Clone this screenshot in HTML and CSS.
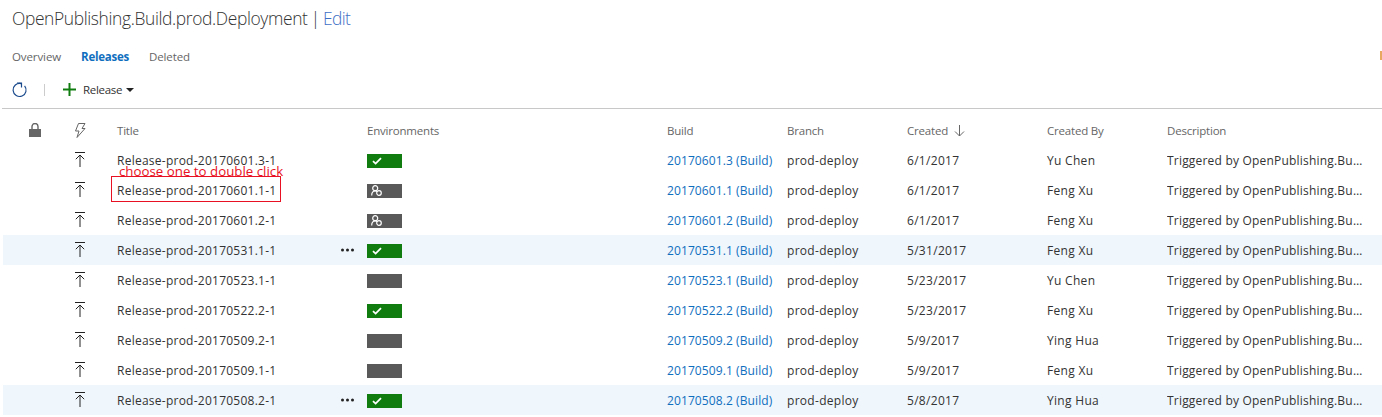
FILE: index.html
```html
<!DOCTYPE html>
<html lang="en">
<head>
<meta charset="utf-8">
<title>OpenPublishing.Build.prod.Deployment</title>
<link rel="stylesheet" href="styles.css">
</head>
<body>
<svg class="defs" width="0" height="0">
  <symbol id="up" viewBox="0 0 10 15"><path d="M0 .5h10M5 15V3M.8 7.200 5 3l4.200 4.200" fill="none" stroke="#222" stroke-width="1"/></symbol>
  <symbol id="check" viewBox="0 0 10 8"><path d="M1 4.200 3.600 6.600 9 1.200" fill="none" stroke="#fff" stroke-width="1.800"/></symbol>
  <symbol id="approver" viewBox="0 0 11 11"><circle cx="4.200" cy="3.200" r="2.500" fill="none" stroke="#fff" stroke-width="1.200"/><path d="M.7 10.500c0-2.800 1.300-4.500 3.500-4.500 .8 0 1.400.2 1.900.5" fill="none" stroke="#fff" stroke-width="1.200"/><circle cx="8" cy="8" r="2.300" fill="none" stroke="#fff" stroke-width="1.200"/></symbol>
  <symbol id="dots" viewBox="0 0 13 4"><circle cx="1.500" cy="2" r="1.500" fill="#222"/><circle cx="6.500" cy="2" r="1.500" fill="#222"/><circle cx="11.500" cy="2" r="1.500" fill="#222"/></symbol>
</svg>
<header class="title"><span>OpenPublishing.Build.prod.Deployment</span> <span class="sep">|</span> <a class="edit">Edit</a></header>
<nav class="tabs">
  <a class="tab">Overview</a>
  <a class="tab active">Releases</a>
  <a class="tab">Deleted</a>
  <i class="edge"></i>
</nav>
<div class="toolbar">
  <svg class="refresh" width="16" height="16" viewBox="0 0 16 16"><path d="M12.600 3.800A6.500 6.500 0 1 1 9 1.600" fill="none" stroke="#1a4a8c" stroke-width="1.200"/><path d="M5 1H9.500V5.500" fill="none" stroke="#1a4a8c" stroke-width="1.200"/></svg>
  <span class="divider"></span>
  <svg class="plus" width="13" height="13" viewBox="0 0 13 13"><path d="M6.500 0v13M0 6.500h13" stroke="#107c10" stroke-width="2"/></svg>
  <span class="new">Release</span>
  <span class="caret"></span>
</div>
<section class="table">
  <div class="row head">
    <span class="c-lock"><svg width="12" height="14" viewBox="0 0 12 14"><path d="M3 6V3.500a3 3 0 0 1 6 0V6" fill="none" stroke="#666" stroke-width="1.400"/><rect x="0" y="6" width="12" height="8" fill="#666"/></svg></span>
    <span class="c-icon"><svg class="bolt" width="12" height="15" viewBox="0 0 12 15"><path d="M4.500.5H11L8 5.500h3L3 14.500 5 8H1.500Z" fill="none" stroke="#666" stroke-width="1"/></svg></span>
    <span>Title</span><span>Environments</span><span>Build</span><span>Branch</span>
    <span class="sorted">Created <svg width="11" height="12" viewBox="0 0 11 12"><path d="M5.500 0v11M1 6.500 5.500 11 10 6.500" fill="none" stroke="#666" stroke-width="1"/></svg></span>
    <span>Created By</span><span>Description</span>
  </div>

  <div class="row"><span class="c-lock"></span><span class="c-icon"><svg class="up"><use href="#up"/></svg></span><span class="name">Release-prod-20170601.3-1</span><span><span class="env ok"><svg class="chk"><use href="#check"/></svg></span></span><a class="link">20170601.3 (Build)</a><span>prod-deploy</span><span>6/1/2017</span><span>Yu Chen</span><span class="desc">Triggered by OpenPublishing.Build.prod.Deployment</span></div>
  <div class="row"><span class="c-lock"></span><span class="c-icon"><svg class="up"><use href="#up"/></svg></span><span class="name">Release-prod-20170601.1-1</span><span><span class="env idle"><svg class="appr"><use href="#approver"/></svg></span></span><a class="link">20170601.1 (Build)</a><span>prod-deploy</span><span>6/1/2017</span><span>Feng Xu</span><span class="desc">Triggered by OpenPublishing.Build.prod.Deployment</span></div>
  <div class="row"><span class="c-lock"></span><span class="c-icon"><svg class="up"><use href="#up"/></svg></span><span class="name">Release-prod-20170601.2-1</span><span><span class="env idle"><svg class="appr"><use href="#approver"/></svg></span></span><a class="link">20170601.2 (Build)</a><span>prod-deploy</span><span>6/1/2017</span><span>Feng Xu</span><span class="desc">Triggered by OpenPublishing.Build.prod.Deployment</span></div>
  <div class="row hot"><span class="c-lock"></span><span class="c-icon"><svg class="up"><use href="#up"/></svg></span><span class="name">Release-prod-20170531.1-1<svg class="more"><use href="#dots"/></svg></span><span><span class="env ok"><svg class="chk"><use href="#check"/></svg></span></span><a class="link">20170531.1 (Build)</a><span>prod-deploy</span><span>5/31/2017</span><span>Feng Xu</span><span class="desc">Triggered by OpenPublishing.Build.prod.Deployment</span></div>
  <div class="row"><span class="c-lock"></span><span class="c-icon"><svg class="up"><use href="#up"/></svg></span><span class="name">Release-prod-20170523.1-1</span><span><span class="env idle"></span></span><a class="link">20170523.1 (Build)</a><span>prod-deploy</span><span>5/23/2017</span><span>Yu Chen</span><span class="desc">Triggered by OpenPublishing.Build.prod.Deployment</span></div>
  <div class="row"><span class="c-lock"></span><span class="c-icon"><svg class="up"><use href="#up"/></svg></span><span class="name">Release-prod-20170522.2-1</span><span><span class="env ok"><svg class="chk"><use href="#check"/></svg></span></span><a class="link">20170522.2 (Build)</a><span>prod-deploy</span><span>5/23/2017</span><span>Feng Xu</span><span class="desc">Triggered by OpenPublishing.Build.prod.Deployment</span></div>
  <div class="row"><span class="c-lock"></span><span class="c-icon"><svg class="up"><use href="#up"/></svg></span><span class="name">Release-prod-20170509.2-1</span><span><span class="env idle"></span></span><a class="link">20170509.2 (Build)</a><span>prod-deploy</span><span>5/9/2017</span><span>Ying Hua</span><span class="desc">Triggered by OpenPublishing.Build.prod.Deployment</span></div>
  <div class="row"><span class="c-lock"></span><span class="c-icon"><svg class="up"><use href="#up"/></svg></span><span class="name">Release-prod-20170509.1-1</span><span><span class="env idle"></span></span><a class="link">20170509.1 (Build)</a><span>prod-deploy</span><span>5/9/2017</span><span>Feng Xu</span><span class="desc">Triggered by OpenPublishing.Build.prod.Deployment</span></div>
  <div class="row hot"><span class="c-lock"></span><span class="c-icon"><svg class="up"><use href="#up"/></svg></span><span class="name">Release-prod-20170508.2-1<svg class="more"><use href="#dots"/></svg></span><span><span class="env ok"><svg class="chk"><use href="#check"/></svg></span></span><a class="link">20170508.2 (Build)</a><span>prod-deploy</span><span>5/8/2017</span><span>Ying Hua</span><span class="desc">Triggered by OpenPublishing.Build.prod.Deployment</span></div>
</section>
<div class="note">choose one to double click</div>
<div class="markup"></div>
</body>
</html>
```
FILE: styles.css
```css
* { box-sizing: border-box; }
html, body { margin: 0; height: 417px; overflow: hidden; background: #fff; }
body { position: relative; font-family: "Open Sans", "Noto Sans", sans-serif; font-size: 12px; color: #333; }
.defs { position: absolute; }
.title { height: 38px; padding-left: 12px; padding-bottom: 2px; line-height: 36px; font-size: 17.400px; font-weight: 300; letter-spacing: -.36px; color: #333; white-space: pre; }
.sep { margin-left: -1px; }
.edit { margin-left: -1px; letter-spacing: -.6px; color: #3f6fc5; }
.tabs { height: 38px; display: flex; align-items: center; gap: 20px; padding-left: 12px; position: relative; font-size: 11.500px; letter-spacing: -.1px; color: #666; margin-top: -1px; margin-bottom: 1px; }
.tab.active { color: #106ebe; font-weight: 700; letter-spacing: -.25px; }
.edge { position: absolute; right: 0; top: 14px; width: 2px; height: 9px; background: #e8a860; }
.toolbar { height: 33px; padding: 0 0 5px 10px; display: flex; align-items: center; border-bottom: 1px solid #c8c8c8; margin-left: 2px; }
.refresh { margin-right: 16px; }
.divider { width: 1px; height: 12px; background: #ccc; margin-right: 18px; }
.plus { margin-right: 7px; }
.new { font-size: 11.500px; letter-spacing: -.3px; color: #333; }
.caret { width: 0; height: 0; margin-left: 4px; border: 4px solid transparent; border-top-color: #222; border-bottom: 0; }
.table { margin-left: 3px; }
.row { height: 30px; display: grid; grid-template-columns: 60px 54px 250px 300px 120px 120px 140px 120px 198px; align-items: center; white-space: nowrap; letter-spacing: .3px; }
.row.head { height: 36px; padding-top: 7px; padding-bottom: 1px; color: #666; }
.hot { background: #eff6fc; }
.row > span, .row > a { display: block; min-width: 0; font-size: 12px; }
.row.head > span { font-size: 11.500px; letter-spacing: -.2px; }
.c-lock { padding-left: 26px; line-height: 0; }
.c-icon { padding-left: 12px; line-height: 0; }
.head .c-icon { padding-left: 11px; }
.up { width: 10px; height: 15px; display: block; margin-top: -1px; }
.name { display: flex !important; justify-content: space-between; align-items: center; padding-right: 13px; letter-spacing: .25px; }
.more { width: 13px; height: 4px; }
.env { display: flex; align-items: center; width: 35px; height: 14px; padding-left: 3px; margin-top: 1px; }
.ok { background: #107c10; }
.idle { background: #595959; }
.chk { width: 10px; height: 8px; margin-left: 2px; }
.appr { width: 11px; height: 11px; margin-left: 1px; }
.link { color: #106ebe; letter-spacing: .1px; }
.sorted svg { margin-left: 3px; vertical-align: -2px; }
.desc { overflow: hidden; text-overflow: ellipsis; letter-spacing: .2px; }
.note { position: absolute; left: 119px; top: 163px; font-size: 13.300px; line-height: 16px; color: #e81123; }
.markup { position: absolute; left: 111px; top: 176px; width: 170px; height: 26px; border: 1px solid #e81123; }
```
